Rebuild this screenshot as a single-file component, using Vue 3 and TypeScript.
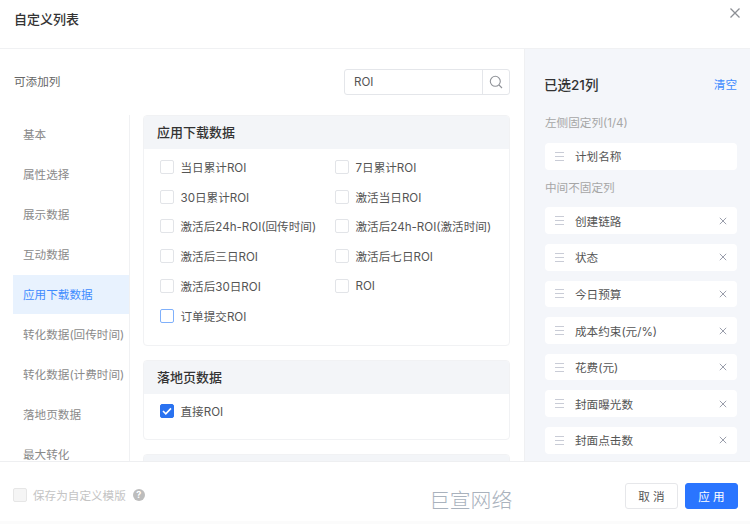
<script setup lang="ts">
const navItems = ['基本', '属性选择', '展示数据', '互动数据', '应用下载数据', '转化数据(回传时间)', '转化数据(计费时间)', '落地页数据', '最大转化']

const downloadCols = [
  '当日累计ROI', '7日累计ROI', '30日累计ROI', '激活当日ROI',
  '激活后24h-ROI(回传时间)', '激活后24h-ROI(激活时间)',
  '激活后三日ROI', '激活后七日ROI', '激活后30日ROI', 'ROI', '订单提交ROI',
]

const middleCols = ['创建链路', '状态', '今日预算', '成本约束(元/%)', '花费(元)', '封面曝光数', '封面点击数']
</script>

<template>
  <div class="dialog">
    <header class="head">
      <h1>自定义列表</h1>
      <svg class="close" width="10" height="10" viewBox="0 0 10 10">
        <path d="M.5.5l9 9M9.5.5l-9 9" stroke="#8c8f94" stroke-width="1.3" fill="none" />
      </svg>
    </header>

    <main class="body">
      <section class="left">
        <div class="left-top">
          <span class="sub">可添加列</span>
          <div class="search">
            <span class="search-text">ROI</span>
            <span class="search-btn">
              <svg width="14" height="14" viewBox="0 0 14 14" fill="none" stroke="#8f9298" stroke-width="1.1">
                <circle cx="6.3" cy="6.3" r="5" />
                <path d="M10 10l3 3" />
              </svg>
            </span>
          </div>
        </div>

        <div class="picker">
          <nav class="nav">
            <a v-for="(item, i) in navItems" :key="item" :class="{ active: i === 4 }">{{ item }}</a>
          </nav>

          <div class="groups">
            <div class="card">
              <div class="card-head">应用下载数据</div>
              <div class="options">
                <label v-for="(col, i) in downloadCols" :key="col" class="option">
                  <span class="box" :class="{ hover: i === 10 }"></span>{{ col }}
                </label>
              </div>
            </div>

            <div class="card">
              <div class="card-head">落地页数据</div>
              <div class="options short">
                <label class="option">
                  <span class="box checked">
                    <svg width="10" height="8" viewBox="0 0 10 8" fill="none" stroke="#fff" stroke-width="1.6">
                      <path d="M1 4l2.8 2.8L9 1.4" />
                    </svg>
                  </span>直接ROI
                </label>
              </div>
            </div>

            <div class="card">
              <div class="card-head"></div>
            </div>
          </div>
        </div>
      </section>

      <aside class="right">
        <div class="right-top">
          <strong>已选21列</strong>
          <a class="clear">清空</a>
        </div>

        <p class="label">左侧固定列(1/4)</p>
        <div class="chosen">
          <span class="grip"><i></i><i></i><i></i></span>
          <span class="name">计划名称</span>
        </div>

        <p class="label mid">中间不固定列</p>
        <div class="chosen-list">
          <div v-for="col in middleCols" :key="col" class="chosen">
            <span class="grip"><i></i><i></i><i></i></span>
            <span class="name">{{ col }}</span>
            <svg class="remove" width="8" height="8" viewBox="0 0 8 8">
              <path d="M.8.8l6.4 6.4M7.2.8L.8 7.2" stroke="#9a9eac" stroke-width="1" fill="none" />
            </svg>
          </div>
        </div>
      </aside>
    </main>

    <footer class="foot">
      <div class="save">
        <span class="box disabled"></span>
        <span>保存为自定义模版</span>
        <span class="help">?</span>
      </div>
      <span class="mark">巨宣网络</span>
      <div class="actions">
        <button class="btn">取 消</button>
        <button class="btn primary">应 用</button>
      </div>
    </footer>
  </div>
</template>

<style>
html,
body {
  margin: 0;
  background: #fff;
}
</style>

<style scoped>
.dialog {
  width: 750px;
  height: 524px;
  display: flex;
  flex-direction: column;
  overflow: hidden;
  font-family: Inter, "Noto Sans CJK SC", sans-serif;
  font-size: 11.6px;
  color: #555;
  background: #fff;
}

.head {
  height: 48px;
  flex: none;
  display: flex;
  justify-content: space-between;
  padding: 0 10px 0 14px;
  border-bottom: 1px solid #f0f1f3;
}

.head h1 {
  margin: 11px 0 0;
  font-size: 13px;
  line-height: 17px;
  font-weight: 500;
  color: #333;
}

.close {
  margin-top: 8px;
}

.body {
  flex: 1;
  min-height: 0;
  display: flex;
}

.left {
  width: 524px;
  flex: none;
  display: flex;
  flex-direction: column;
  padding: 20px 14px 0 13px;
  box-sizing: border-box;
}

.left-top {
  height: 26px;
  flex: none;
  display: flex;
  justify-content: space-between;
  align-items: center;
  margin-bottom: 20px;
}

.sub {
  padding: 0 0 2px 1px;
  color: #666;
}

.search {
  width: 166px;
  height: 26px;
  box-sizing: border-box;
  display: flex;
  align-items: center;
  justify-content: space-between;
  border: 1px solid #e4e6ea;
  border-radius: 3px;
}

.search-text {
  padding-left: 9px;
  color: #555;
}

.search-btn {
  width: 26px;
  height: 24px;
  display: flex;
  align-items: center;
  justify-content: center;
  border-left: 1px solid #e4e6ea;
}

.picker {
  flex: 1;
  min-height: 0;
  display: flex;
  overflow: hidden;
}

.nav {
  width: 117px;
  flex: none;
  display: flex;
  flex-direction: column;
  border-right: 1px solid #f0f1f3;
  box-sizing: border-box;
}

.nav a {
  height: 39.9px;
  flex: none;
  display: flex;
  align-items: center;
  padding: 0 0 1px 10px;
  box-sizing: border-box;
  color: #8a8a8a;
  white-space: nowrap;
}

.nav a.active {
  background: #e8f2fe;
  color: #3f8cff;
}

.groups {
  flex: 1;
  padding-left: 13px;
  display: flex;
  flex-direction: column;
  gap: 14px;
}

.card {
  flex: none;
  border: 1px solid #f1f2f4;
  border-radius: 4px;
  overflow: hidden;
}

.card-head {
  height: 33px;
  padding: 0 0 3px 13px;
  box-sizing: border-box;
  display: flex;
  align-items: center;
  background: #f3f5f8;
  font-size: 13px;
  font-weight: 500;
  color: #333;
}

.options {
  height: 196px;
  padding: 3px 0 0 16px;
  box-sizing: border-box;
  display: grid;
  grid-template-columns: 175px 1fr;
  grid-auto-rows: 29.8px;
}

.options.short {
  height: 45px;
  padding-top: 2px;
}

.option {
  display: flex;
  align-items: center;
  white-space: nowrap;
  color: #555;
}

.box {
  width: 14px;
  height: 14px;
  box-sizing: border-box;
  flex: none;
  display: flex;
  align-items: center;
  justify-content: center;
  margin-right: 6.5px;
  border: 1px solid #e2e4e8;
  border-radius: 2px;
  background: #fff;
}

.box.hover {
  border-color: #7fb0fb;
}

.box.checked {
  border-color: #2a72f0;
  background: #2a72f0;
}

.box.disabled {
  margin-right: 6px;
  background: #f5f5f5;
  border-color: #e6e6e6;
}

.right {
  flex: 1;
  min-width: 0;
  padding: 0 13px 0 20px;
  overflow: hidden;
  background: #f4f6fa;
  border-left: 1px solid #eff0f2;
}

.right-top {
  height: 24px;
  margin-top: 23px;
  display: flex;
  justify-content: space-between;
  align-items: center;
}

.right-top strong {
  font-size: 13.5px;
  font-weight: 500;
  color: #333;
  margin-left: -1px;
}

.clear {
  color: #3f8cff;
}

.label {
  margin: 19px 0 0;
  line-height: 16px;
  color: #a6a6a6;
}

.label.mid {
  margin: 10.4px 0 0;
}

.chosen {
  height: 26.6px;
  margin-top: 12px;
  display: flex;
  align-items: center;
  padding-left: 10px;
  background: #fff;
  border-radius: 4px;
}

.chosen-list {
  display: flex;
  flex-direction: column;
  gap: 10px;
  margin-top: 11.5px;
}

.chosen-list .chosen {
  flex: none;
  margin-top: 0;
}

.grip {
  width: 9px;
  display: flex;
  flex-direction: column;
  gap: 3px;
  margin-right: 11px;
}

.grip i {
  height: 1px;
  background: #c9ccd6;
}

.name {
  flex: 1;
  color: #555;
}

.remove {
  margin-right: 10px;
}

.foot {
  height: 63px;
  flex: none;
  display: flex;
  align-items: center;
  padding: 5px 12px 0 13px;
  box-sizing: border-box;
  border-top: 1px solid #eeeff1;
  background: linear-gradient(#fff 59px, #fbfbfb 59px);
}

.save {
  width: 416px;
  margin-top: -2px;
  display: flex;
  align-items: center;
  color: #c4c4c4;
}

.help {
  width: 12px;
  height: 12px;
  margin-left: 7px;
  border-radius: 50%;
  background: #bdbdbd;
  color: #fff;
  font-size: 9px;
  font-weight: 700;
  line-height: 12px;
  text-align: center;
}

.mark {
  font-size: 20.8px;
  font-weight: 300;
  margin-top: 6px;
  color: #a9b2bd;
  white-space: nowrap;
}

.actions {
  margin-left: auto;
  display: flex;
  gap: 7px;
}

.btn {
  width: 53px;
  height: 26px;
  padding: 0;
  font: inherit;
  color: #555;
  background: #fff;
  border: 1px solid #e6e7ea;
  border-radius: 3px;
}

.btn.primary {
  color: #fff;
  background: #2a75ff;
  border-color: #2a75ff;
}
</style>
